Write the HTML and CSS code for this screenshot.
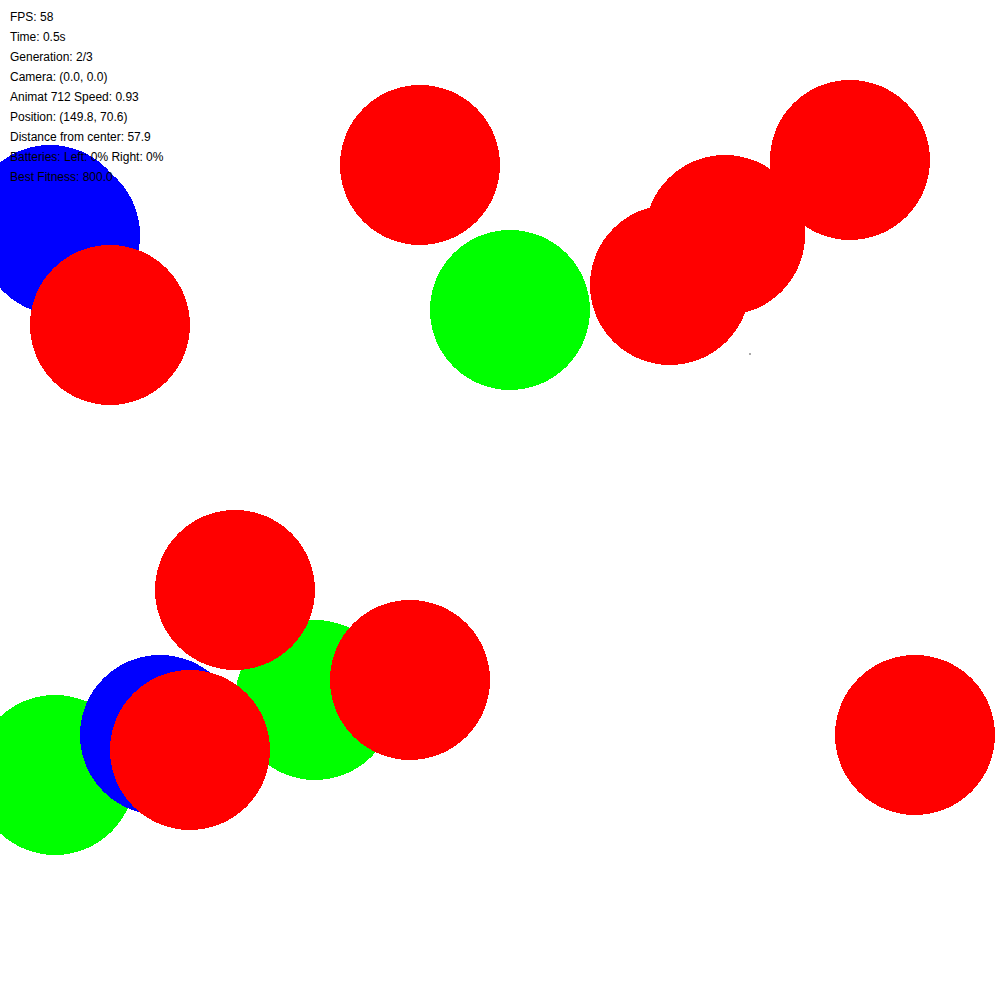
FILE: index.html
```html
<!DOCTYPE html>
<html lang="en">
<head>
  <meta charset="UTF-8">
  <meta name="viewport" content="width=device-width, initial-scale=1.0">
  <title>Animat Simulation</title>
  <link rel="stylesheet" href="styles.css">
</head>
<body>
  <div class="world">
    <svg class="scene" width="1000" height="1000" viewBox="0 0 1000 1000" shape-rendering="crispEdges">
      <!-- animat -->
      <circle cx="50" cy="225" r="80" fill="#0000ff"/>
      <circle cx="60" cy="235" r="80" fill="#0000ff"/>
      <circle cx="110" cy="325" r="80" fill="#ff0000"/>
      <circle cx="420" cy="165" r="80" fill="#ff0000"/>
      <circle cx="510" cy="310" r="80" fill="#00ff00"/>
      <circle cx="725" cy="235" r="80" fill="#ff0000"/>
      <circle cx="670" cy="285" r="80" fill="#ff0000"/>
      <circle cx="850" cy="160" r="80" fill="#ff0000"/>

      <circle cx="55" cy="775" r="80" fill="#00ff00"/>
      <circle cx="160" cy="735" r="80" fill="#0000ff"/>
      <circle cx="315" cy="700" r="80" fill="#00ff00"/>
      <circle cx="190" cy="750" r="80" fill="#ff0000"/>
      <circle cx="235" cy="590" r="80" fill="#ff0000"/>
      <circle cx="410" cy="680" r="80" fill="#ff0000"/>
      <circle cx="915" cy="735" r="80" fill="#ff0000"/>

      <rect x="749" y="353" width="2" height="2" fill="#aaaaaa"/>
    </svg>

    <div class="hud">
      <div class="hud-line">FPS: 58</div>
      <div class="hud-line">Time: 0.5s</div>
      <div class="hud-line">Generation: 2/3</div>
      <div class="hud-line">Camera: (0.0, 0.0)</div>
      <div class="hud-line">Animat 712 Speed: 0.93</div>
      <div class="hud-line">Position: (149.8, 70.6)</div>
      <div class="hud-line">Distance from center: 57.9</div>
      <div class="hud-line">Batteries: Left: 0% Right: 0%</div>
      <div class="hud-line">Best Fitness: 800.0</div>
    </div>
  </div>
</body>
</html>
```

FILE: styles.css
```css
body {
  margin: 0;
  background: #ffffff;
  overflow: hidden;
}
.world {
  position: relative;
  width: 1000px;
  height: 1000px;
}
.scene {
  display: block;
}
.hud {
  position: absolute;
  top: 7px;
  left: 10px;
  font-family: "Liberation Sans", Arial, sans-serif;
  font-size: 12px;
  line-height: 20px;
  color: #000000;
}
.hud-line {
  white-space: nowrap;
}
```
